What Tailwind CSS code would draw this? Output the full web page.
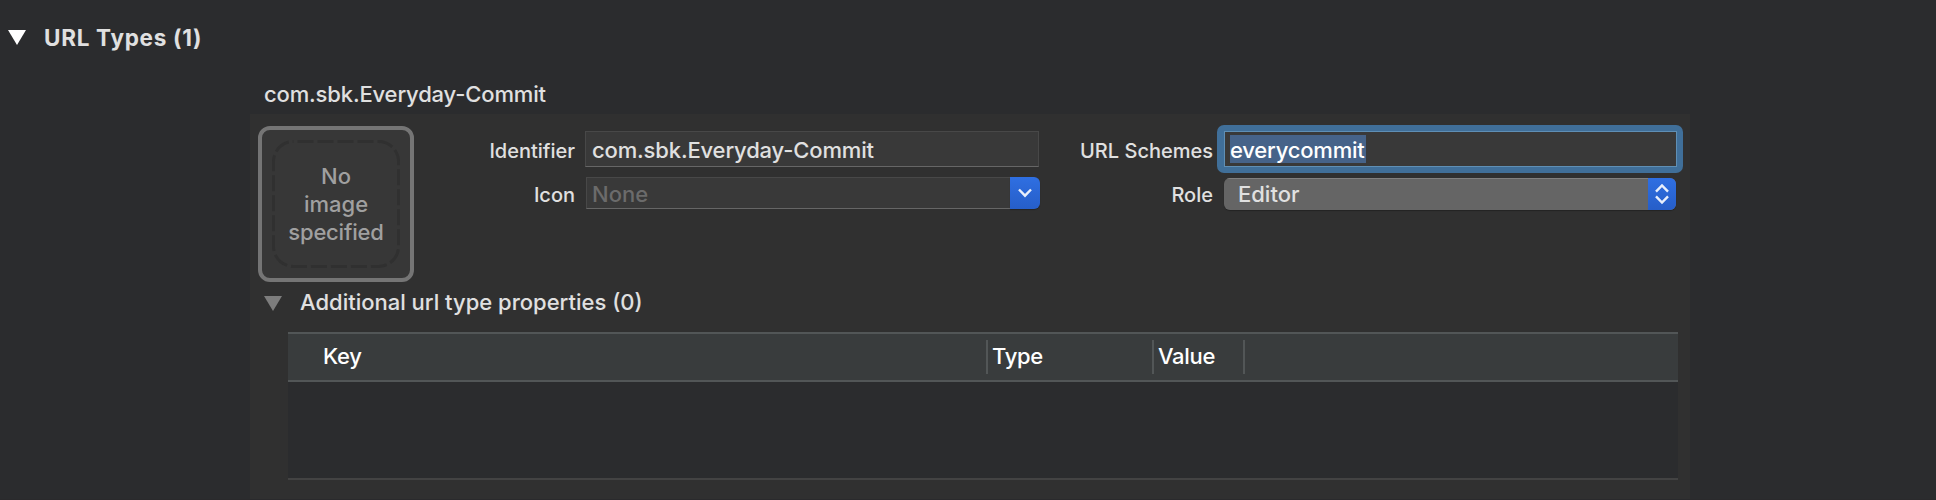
<!DOCTYPE html>
<html lang="en">
<head>
<meta charset="utf-8">
<title>URL Types</title>
<script src="https://cdn.jsdelivr.net/npm/@tailwindcss/browser@4"></script>
</head>
<body class="w-[1936px] h-[500px] overflow-hidden bg-[#2b2c2e] font-['Inter',sans-serif] text-[22px] leading-[28px] font-[450] text-[#e0e0e0] whitespace-nowrap">
<div class="flex h-[500px] flex-col border-b border-[#2a2a2c]">
  <header class="flex h-[80px] shrink-0 pl-[8px] pt-[24px]">
    <svg class="mt-[6px] h-[15px] w-[18px]" viewBox="0 0 18 15"><path d="M0 0H18L9 15Z" fill="#fff"/></svg>
    <h1 class="ml-[18px] text-[22.5px] font-bold tracking-[0.7px]">URL Types (1)</h1>
  </header>
  <div class="h-[34px] shrink-0 pl-[264px]"><span class="tracking-[-0.15px]">com.sbk.Everyday-Commit</span></div>

  <section class="ml-[250px] flex w-[1440px] grow flex-col bg-[#303030]">
    <div class="flex h-[180px] shrink-0">
      <div class="relative ml-[8px] mt-[12px] flex h-[156px] w-[156px] flex-col items-center justify-center rounded-[12px] border-4 border-[#757575] bg-[#373737] text-[#a0a0a0]">
        <svg class="absolute left-[10px] top-[10px] h-[128px] w-[128px]" viewBox="0 0 128 128"><rect x="1.5" y="1.5" width="125" height="125" rx="20" fill="none" stroke="#303030" stroke-width="3" stroke-dasharray="16 4" stroke-dashoffset="-4"/></svg>
        <span class="relative">No</span>
        <span class="relative">image</span>
        <span class="relative tracking-[-0.2px]">specified</span>
      </div>
      <div class="ml-[46px] w-[115px] pt-[23px] text-right text-[20px]">
        <div>Identifier</div>
        <div class="mt-[16px]">Icon</div>
      </div>
      <div class="ml-[10px] w-[455px] pt-[17px]">
        <div class="flex h-[36px] w-[454px] items-center border border-b-[#666] border-[#484848] bg-[#393939] pl-[6px] pt-[2px]"><span class="tracking-[-0.15px]">com.sbk.Everyday-Commit</span></div>
        <div class="ml-px mt-[10px] flex h-[32px] w-[454px]">
          <div class="flex grow items-center border border-r-0 border-[#484848] border-b-[#666] bg-[#393939] pl-[5px] pt-[2px] text-[#6b6b6b]"><span>None</span></div>
          <div class="flex w-[30px] items-center justify-center rounded-r-[6px] bg-linear-to-b from-[#2f6fe2] to-[#265ec8] shadow-[0_1px_1px_#0004]">
            <svg class="h-[10px] w-[14px]" viewBox="0 0 14 10"><path d="M1 1.5L7 7.7L13 1.5" fill="none" stroke="#e8effc" stroke-width="2.4"/></svg>
          </div>
        </div>
      </div>
      <div class="w-[173px] pt-[23px] text-right text-[20px]">
        <div>URL Schemes</div>
        <div class="mt-[16px]">Role</div>
      </div>
      <div class="ml-[4px] w-[466px] pt-[11px]">
        <div class="flex h-[48px] rounded-[7px] bg-[#406f99] p-[6px]">
          <div class="ml-px flex grow items-center border border-[#5f8fb5] bg-[#393939] pl-[5px]"><span class="h-[28px] w-[136px] bg-[#466389] pt-px text-white tracking-[-0.2px]">everycommit</span></div>
        </div>
        <div class="ml-[7px] mt-[5px] h-[32px] w-[452px] rounded-[6px] shadow-[0_1px_1px_#0004]">
          <div class="flex h-[32px] overflow-hidden rounded-[6px] bg-[#656565]">
            <div class="flex grow items-center border-t border-[#808080] pb-px pl-[14px]"><span>Editor</span></div>
            <div class="flex w-[28px] items-center justify-center bg-linear-to-b from-[#2f6fe2] to-[#265ec8]">
              <svg class="h-[22px] w-[14px]" viewBox="0 0 14 22"><path d="M1 8.6L7 2.4L13 8.6M1 13.4L7 19.6L13 13.4" fill="none" stroke="#e8effc" stroke-width="2.4"/></svg>
            </div>
          </div>
        </div>
      </div>
    </div>

    <div class="flex h-[38px] shrink-0 pl-[14px]">
      <svg class="mt-[2px] h-[15px] w-[18px]" viewBox="0 0 18 15"><path d="M0 0H18L9 15Z" fill="#7d7d7d"/></svg>
      <h2 class="ml-[18px] -mt-[6px]">Additional url type properties (0)</h2>
    </div>

    <div class="ml-[38px] w-[1390px]">
      <div class="flex h-[50px] items-center border-y-2 border-[#525657] bg-[#393c3d] font-medium tracking-[-0.3px] text-white">
        <div class="w-[698px] pb-[2px] pl-[35px]">Key</div>
        <div class="flex h-[34px] w-[166px] items-center border-l-2 border-[#525657] pb-[2px] pl-[4px]">Type</div>
        <div class="flex h-[34px] w-[91px] items-center border-l-2 border-[#525657] pb-[2px] pl-[4px]">Value</div>
        <div class="h-[34px] border-l-2 border-[#525657]"></div>
      </div>
      <div class="h-[98px] border-b-2 border-[#434343] bg-[#2b2c2e]"></div>
    </div>
  </section>
</div>
</body>
</html>
